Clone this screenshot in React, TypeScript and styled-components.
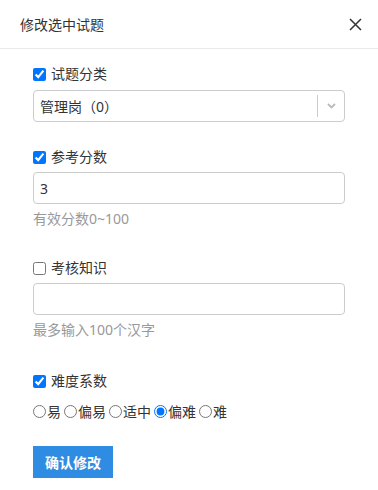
import { FC, useState } from 'react';
import styled, { createGlobalStyle } from 'styled-components';

const GlobalStyle = createGlobalStyle`
  body {
    margin: 0;
    background: #fff;
    font-family: "Noto Sans", "Noto Sans CJK SC", sans-serif;
    font-size: 14px;
    color: #333;
  }
`;

const Dialog = styled.div`
  width: 378px;
  height: 490px;
  background: #fff;
`;

const Header = styled.div`
  height: 48px;
  display: flex;
  align-items: center;
  justify-content: space-between;
  padding: 0 15px 0 20px;
  border-bottom: 1px solid #e9e9e9;
`;

const Title = styled.span`
  font-size: 14px;
  color: #333;
`;

const CloseButton = styled.button`
  display: flex;
  align-items: center;
  justify-content: center;
  width: 16px;
  height: 16px;
  padding: 0;
  border: none;
  background: none;
  cursor: pointer;
`;

const Body = styled.div`
  padding: 15px 33px 0 33px;
`;

const Field = styled.div<{ $gap: number }>`
  margin-bottom: ${(p) => p.$gap}px;
`;

const CheckLabel = styled.label`
  display: flex;
  align-items: center;
  height: 20px;
  line-height: 20px;
  color: #333;

  input {
    width: 13px;
    height: 13px;
    margin: 0 5px 0 0;
  }
`;

const SelectBox = styled.div`
  margin-top: 6px;
  height: 32px;
  box-sizing: border-box;
  border: 1px solid #ccc;
  border-radius: 4px;
  display: flex;
  align-items: center;
`;

const SelectValue = styled.div`
  flex: 1;
  padding-left: 6px;
  color: #333;
`;

const Divider = styled.span`
  width: 1px;
  align-self: stretch;
  margin: 4px 0;
  background: #ccc;
`;

const Indicator = styled.div`
  width: 26px;
  display: flex;
  align-items: center;
  justify-content: center;
`;

const TextInput = styled.input`
  display: block;
  margin-top: 5px;
  width: 312px;
  height: 32px;
  box-sizing: border-box;
  border: 1px solid #ccc;
  border-radius: 4px;
  padding: 0 6px;
  font-family: inherit;
  font-size: 14px;
  color: #333;
  outline: none;
`;

const Help = styled.div`
  margin-top: 5px;
  line-height: 20px;
  color: #999;
`;

const RadioRow = styled.div`
  margin-top: 10px;
  display: flex;
  align-items: center;
  height: 20px;
`;

const RadioLabel = styled.label`
  display: flex;
  align-items: center;
  margin-right: 3px;
  color: #333;

  input {
    width: 13px;
    height: 13px;
    margin: 0 1px 0 0;
  }
`;

const SubmitButton = styled.button`
  margin-top: 25px;
  height: 32px;
  padding: 0 12px;
  border: none;
  background: #2e8de2;
  color: #fff;
  font-family: inherit;
  font-size: 14px;
  font-weight: bold;
  cursor: pointer;
`;

const levels = ['易', '偏易', '适中', '偏难', '难'];

const CloseIcon: FC = () => (
  <svg width="13" height="13" viewBox="0 0 13 13">
    <path d="M1 1 L12 12 M12 1 L1 12" stroke="#333" strokeWidth="1.5" fill="none" />
  </svg>
);

const Chevron: FC = () => (
  <svg width="9" height="6" viewBox="0 0 9 6">
    <path d="M1 1 L4.5 4.5 L8 1" stroke="#bbb" strokeWidth="1.8" fill="none" />
  </svg>
);

export default function App() {
  const [level, setLevel] = useState('偏难');
  const [score, setScore] = useState('3');

  return (
    <Dialog>
      <GlobalStyle />
      <Header>
        <Title>修改选中试题</Title>
        <CloseButton>
          <CloseIcon />
        </CloseButton>
      </Header>
      <Body>
        <Field $gap={25}>
          <CheckLabel>
            <input type="checkbox" defaultChecked />
            试题分类
          </CheckLabel>
          <SelectBox>
            <SelectValue>管理岗（0）</SelectValue>
            <Divider />
            <Indicator>
              <Chevron />
            </Indicator>
          </SelectBox>
        </Field>
        <Field $gap={29}>
          <CheckLabel>
            <input type="checkbox" defaultChecked />
            参考分数
          </CheckLabel>
          <TextInput value={score} onChange={(e) => setScore(e.target.value)} />
          <Help>有效分数0~100</Help>
        </Field>
        <Field $gap={31}>
          <CheckLabel>
            <input type="checkbox" />
            考核知识
          </CheckLabel>
          <TextInput defaultValue="" />
          <Help>最多输入100个汉字</Help>
        </Field>
        <Field $gap={0}>
          <CheckLabel>
            <input type="checkbox" defaultChecked />
            难度系数
          </CheckLabel>
          <RadioRow>
            {levels.map((l) => (
              <RadioLabel key={l}>
                <input
                  type="radio"
                  name="level"
                  checked={level === l}
                  onChange={() => setLevel(l)}
                />
                {l}
              </RadioLabel>
            ))}
          </RadioRow>
        </Field>
        <SubmitButton>确认修改</SubmitButton>
      </Body>
    </Dialog>
  );
}
